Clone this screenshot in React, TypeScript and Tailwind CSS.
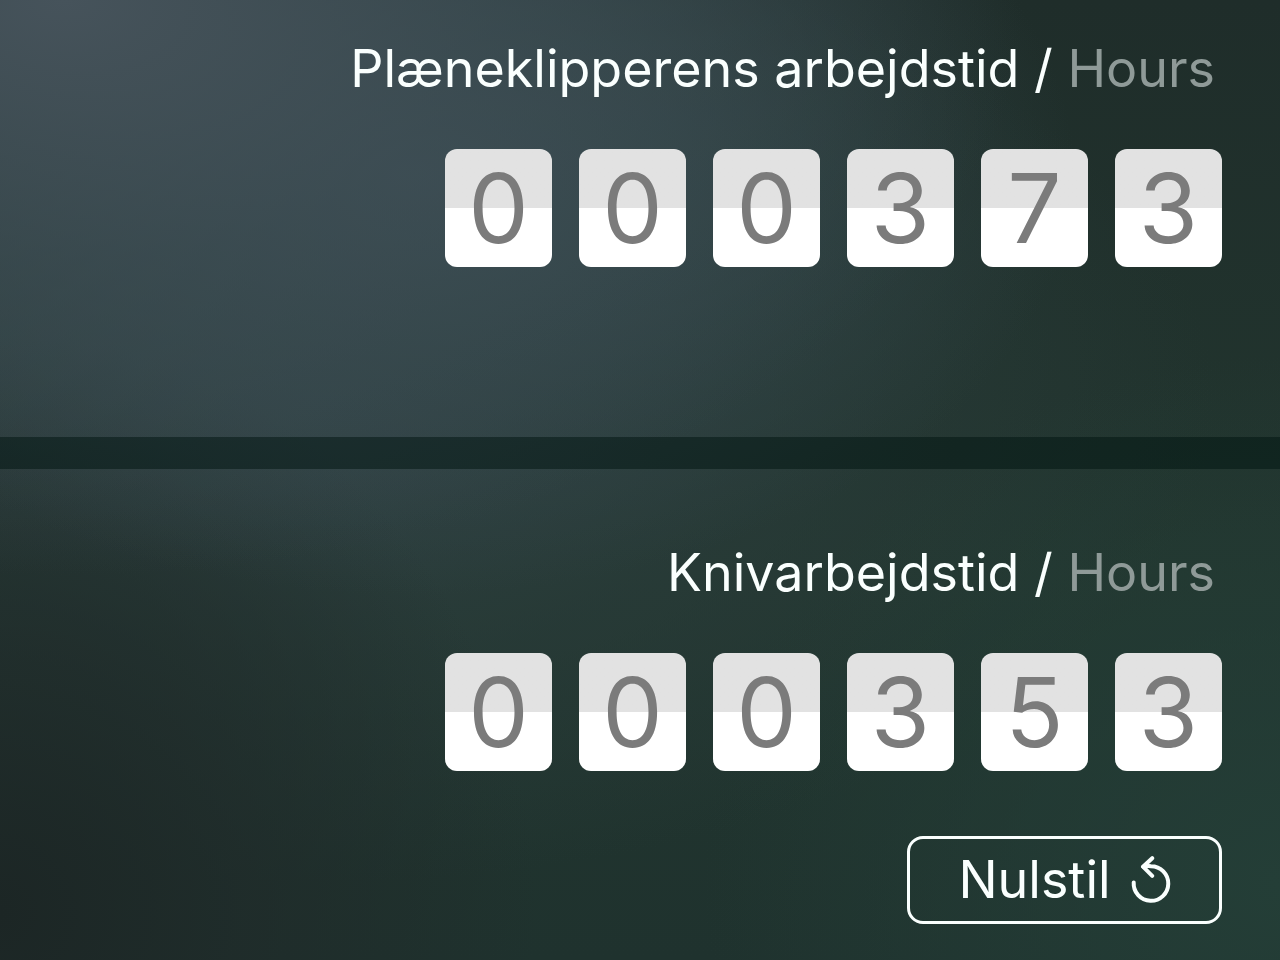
type CounterProps = { id: string; label: string; unit: string; value: string };

function Counter({ id, label, unit, value }: CounterProps) {
  return (
    <div className="flex flex-col items-end gap-[48px]">
      <h2 id={id} className="pr-[7px] text-right text-[52px] leading-[64px] font-normal text-[#fafffe]">
        {label} / <span className="text-[#8f9a98]">{unit}</span>
      </h2>
      <div role="group" aria-labelledby={id} className="flex gap-[27px]">
        {value.split("").map((digit, i) => (
          <span
            key={i}
            className="flex h-[118px] w-[107px] items-center justify-center rounded-xl bg-linear-to-b from-[#e2e2e2] from-50% to-white to-50% text-[96px] leading-[120px] text-[#7b7b7b]"
          >
            {digit}
          </span>
        ))}
      </div>
    </div>
  );
}

function ResetIcon() {
  return (
    <svg width="40" height="48" viewBox="0 0 40 48" fill="none" stroke="currentColor" strokeWidth="4" strokeLinecap="round" strokeLinejoin="round" aria-hidden="true">
      <path d="M2.7 26.5A17.3 17.3 0 1 0 20 10.2Q16.5 9.8 12.5 10.7" />
      <path d="M21.2 2.2L12 10.7L21.2 19.8" />
    </svg>
  );
}

export default function App() {
  return (
    <main className="flex min-h-screen flex-col bg-[#22332f] bg-[radial-gradient(ellipse_75%_60%_at_5%_0%,#46535b_0%,#3f4e5599_45%,#33454a00_100%),radial-gradient(ellipse_52%_44%_at_32%_18%,#394b51_0%,#34474bcc_40%,#2f424500_100%),radial-gradient(ellipse_42%_60%_at_0%_95%,#1c2625_0%,#1f2a29bb_45%,#22302d00_100%),radial-gradient(ellipse_45%_55%_at_100%_92%,#243e37_0%,#243e3700_100%),radial-gradient(ellipse_70%_50%_at_25%_42%,#2f4042_0%,#2b3d3c99_50%,#22352f00_100%),linear-gradient(to_bottom,#1f2d2a,#22362f_60%,#1f322e)] font-[Inter,'Liberation_Sans',sans-serif]">
      <section className="px-[58px] pt-[37px] pb-[170px]">
        <Counter id="mower-hours" label="Plæneklipperens arbejdstid" unit="Hours" value="000373" />
      </section>
      <div className="h-[32px] bg-[#00130f]/50" />
      <section className="flex grow flex-col items-end gap-[65px] px-[58px] pt-[72px] pb-[36px]">
        <Counter id="blade-hours" label="Knivarbejdstid" unit="Hours" value="000353" />
        <button
          type="button"
          className="flex h-[88px] w-[315px] items-center justify-center gap-5 rounded-2xl border-3 border-[#fafffe] text-[52px] leading-[64px] text-[#fafffe]"
        >
          Nulstil
          <ResetIcon />
        </button>
      </section>
    </main>
  );
}
